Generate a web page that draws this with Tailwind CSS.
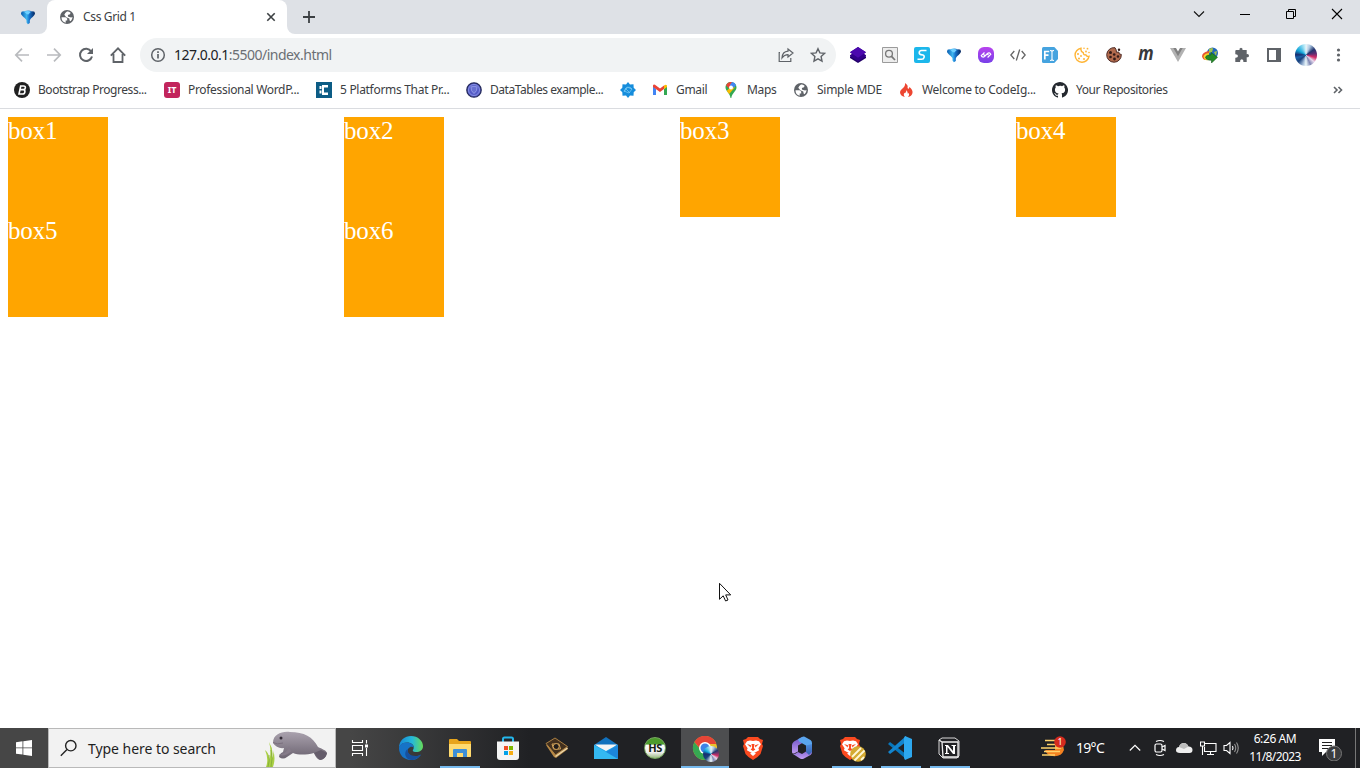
<!DOCTYPE html>
<html lang="en">
<head>
<meta charset="utf-8">
<title>Css Grid 1</title>
<script src="https://cdn.jsdelivr.net/npm/@tailwindcss/browser@4"></script>
</head>
<body class="w-[1360px] h-[768px] overflow-hidden bg-white font-['Noto_Sans',sans-serif] flex flex-col">
<svg class="absolute w-0 h-0">
  <defs>
    <linearGradient id="pin" x1="0" y1="0" x2="1" y2="0"><stop offset="0" stop-color="#075aae"/><stop offset=".4" stop-color="#3fb6f0"/><stop offset=".6" stop-color="#1672cc"/><stop offset="1" stop-color="#05255c"/></linearGradient>
    <linearGradient id="edge" x1="0" y1="0" x2="1" y2="0"><stop offset="0" stop-color="#1688d8"/><stop offset=".55" stop-color="#25b9d9"/><stop offset="1" stop-color="#66dc58"/></linearGradient>
    <linearGradient id="purp" x1="0" y1="0" x2="0" y2="1"><stop offset="0" stop-color="#b843ee"/><stop offset="1" stop-color="#7740e8"/></linearGradient>
    <linearGradient id="sea" x1="0" y1="0" x2="0" y2="1"><stop offset="0" stop-color="#aaa2ae"/><stop offset="1" stop-color="#68606d"/></linearGradient>
    <linearGradient id="sun" x1="0" y1="0" x2="0" y2="1"><stop offset="0" stop-color="#ffd76a"/><stop offset="1" stop-color="#f07c1c"/></linearGradient>
    <linearGradient id="ms" x1="0" y1="0" x2="0" y2="1"><stop offset="0" stop-color="#6a4fc4"/><stop offset="1" stop-color="#c09cf2"/></linearGradient>
    <linearGradient id="ms2" x1="0" y1="0" x2="0" y2="1"><stop offset="0" stop-color="#4d8fe0"/><stop offset="1" stop-color="#3b5fb0"/></linearGradient>
    <symbol id="globe" viewBox="0 0 16 16"><circle cx="8" cy="8" r="7" fill="#5f6368"/><path d="M2.500 8.200h4.100l1.600 1.400v1.800l-1.500.2v2.100C4 13.300 2.400 11 2.500 8.200zM8 2.500c1.200 0 2.600.4 3.600 1.200L11 5.200 8.800 6l.4 1.800 2.900.8 1.400-.6c-.1 1.500-.8 3.200-1.900 4.200l-1-.7-.3-2-3-1.200-2-2.500 1-1.700z" fill="#fff"/></symbol>
    <symbol id="pinico" viewBox="0 0 16 16"><path d="M1 4.500Q1 2 4 2.400 8 .5 12 2.400q3-.4 3 2.100c0 2.200-5.200 5.200-5.200 7.200V14L7.900 15.200 6.500 13.400v-1.800C6.500 9.700 1 6.800 1 4.500z" fill="url(#pin)"/><path d="M4 2.800q4-1.500 7 0L8.300 5.500 7 5.200z" fill="#6fd0ff"/></symbol>
    <symbol id="brave" viewBox="0 0 24 24"><path d="M7 1h10l2 2 3 1-1 4 1 2-2.500 8-3 3L12 24l-4.500-3-3-3L2 10l1-2-1-4 3-1z" fill="#fb4a20"/><path d="M12 5l3-.6 3 .8 2 3-2.600 4 .7 2L15 16l-3 1.500-3-1.500-3.100-1.800.7-2L4 8.200l2-3 3-.8z" fill="#fff"/><path d="M6 8l4 1.200-.3 2.400zM18 8l-4 1.200.3 2.400zM10.500 8h3l-.6 4 1.500 1.500L12 15l-2.400-1.500 1.500-1.500z" fill="#fb4a20"/><path d="M9 17.600l3-1.300 3 1.300-3 2.500z" fill="#fff"/></symbol>
  </defs>
</svg>

<!-- Tab strip -->
<header class="h-[34px] shrink-0 bg-white flex">
  <div class="w-[47px] bg-[#dee1e6] rounded-br-lg flex items-center pl-5"><svg class="w-4 h-4"><use href="#pinico"/></svg></div>
  <div class="w-[240px] bg-[#dee1e6]">
    <div class="h-full bg-white rounded-t-lg flex items-center pl-3 pr-[10px] text-xs text-[#3c4043]">
      <svg class="w-4 h-4 mr-2"><use href="#globe"/></svg>
      <span class="flex-1 tracking-[-0.35px]">Css Grid 1</span>
      <svg class="w-3 h-3" viewBox="0 0 12 12" stroke="#3c4043" stroke-width="1.600"><path d="M2.300 2.300l7.400 7.400M9.700 2.300l-7.400 7.400"/></svg>
    </div>
  </div>
  <div class="flex-1 bg-[#dee1e6] rounded-bl-lg flex justify-between">
    <svg class="w-3 h-3 mt-[11px] ml-4" viewBox="0 0 12 12" stroke="#3c4043" stroke-width="1.800"><path d="M6 0v12M0 6h12"/></svg>
    <div class="flex h-7 items-center">
      <div class="w-[46px] flex justify-center"><svg width="12" height="12" viewBox="0 0 12 12" fill="none" stroke="#111" stroke-width="1.100"><path d="M1 3.500l5 5 5-5"/></svg></div>
      <div class="w-[46px] flex justify-center"><svg width="10" height="10" viewBox="0 0 10 10" stroke="#000"><path d="M0 5.500h10"/></svg></div>
      <div class="w-[46px] flex justify-center"><svg width="10" height="10" viewBox="0 0 10 10" fill="none" stroke="#000"><path d="M.5 2.500h7v7h-7zM2.500 2.500v-2h7v7h-2"/></svg></div>
      <div class="w-[46px] flex justify-center"><svg width="12" height="12" viewBox="0 0 12 12" stroke="#000" stroke-width="1.100"><path d="M1 1l10 10M11 1L1 11"/></svg></div>
    </div>
  </div>
</header>

<!-- Toolbar -->
<div class="h-[42px] shrink-0 flex items-center pl-[6px]">
  <nav class="flex w-[134px]">
    <div class="w-8 flex justify-center"><svg width="16" height="16" viewBox="0 0 16 16" fill="none" stroke="#b9bbbe" stroke-width="1.700"><path d="M15 8H2M8 1.700L1.800 8 8 14.300"/></svg></div>
    <div class="w-8 flex justify-center"><svg width="16" height="16" viewBox="0 0 16 16" fill="none" stroke="#b9bbbe" stroke-width="1.700"><path d="M1 8h13M8 1.700L14.200 8 8 14.300"/></svg></div>
    <div class="w-8 flex justify-center"><svg width="16" height="16" viewBox="0 0 16 16" fill="none" stroke="#5f6368" stroke-width="2"><path d="M13.200 4.500A6.100 6.100 0 1 0 14 9.500"/><path d="M15 1v6H9z" fill="#5f6368" stroke="none"/></svg></div>
    <div class="w-8 flex justify-center"><svg width="16" height="16" viewBox="0 0 16 16" fill="none" stroke="#5f6368" stroke-width="1.800"><path d="M.8 8.600L8 1.300l7.200 7.300M3.500 7v8h9V7"/></svg></div>
  </nav>
  <div class="w-[696px] h-[34px] bg-[#f1f3f4] rounded-full flex items-center pl-[10px] pr-[10px] text-sm text-[#6b6f74]">
    <svg class="mr-2" width="16" height="16" viewBox="0 0 16 16" fill="none" stroke="#5f6368" stroke-width="1.500"><circle cx="8" cy="8" r="6.300"/><path d="M8 7v4.500M8 4.300v1.600" stroke-width="1.700"/></svg>
    <span class="flex-1 tracking-[-0.51px]"><span class="text-[#202124]">127.0.0.1</span>:5500/index.html</span>
    <svg class="mr-4" width="16" height="16" viewBox="0 0 16 16" fill="none" stroke="#5f6368" stroke-width="1.200"><path d="M2 5.500H1.200v9h11.600V11M10 2l5 4-5 4V7.700c-2.600 0-4.300.8-6 3.300.2-4 2.300-6.500 6-6.800z"/></svg>
    <svg width="16" height="16" viewBox="0 0 16 16" fill="none" stroke="#5f6368" stroke-width="1.400"><path d="M8 1.700l1.900 4.200 4.600.5-3.400 3.100.9 4.600L8 11.800l-4 2.300.9-4.600L1.500 6.400l4.600-.5z"/></svg>
  </div>
  <div class="flex ml-[6px] items-center">
    <div class="w-8 flex justify-center"><svg width="16" height="16" viewBox="0 0 16 16"><path d="M0 9.800l2-1.300h12l2 1.300v1.200L8 16l-8-5z" fill="#220068"/><path d="M8 0l8 5.300-2 1.500 2 1.400v1L8 14.500 0 9.200v-1l2-1.400-2-1.500z" fill="#32018a"/><path d="M8 0l8 5.300-8 5.400-8-5.400z" fill="#4b08ae"/></svg></div>
    <div class="w-8 flex justify-center"><svg width="16" height="16" viewBox="0 0 16 16" fill="none"><path d="M.5.500h15v15H.5z" fill="#ededed" stroke="#9b9b9b"/><circle cx="7" cy="6.800" r="3.400" stroke="#777" stroke-width="1.300"/><path d="M9.500 9.300l3.500 3.700" stroke="#777" stroke-width="1.700"/></svg></div>
    <div class="w-8 flex justify-center"><svg width="16" height="16" viewBox="0 0 16 16"><rect width="16" height="16" rx="2" fill="#1cb7eb"/><path d="M12.500 3.500H7.500c-2.800 0-3 3.600-.6 4.100l2 .4c2.200.5 1.400 4.300-1.200 4.300H3.500" fill="none" stroke="#fff" stroke-width="1.600"/></svg></div>
    <div class="w-8 flex justify-center"><svg class="w-4 h-4"><use href="#pinico"/></svg></div>
    <div class="w-8 flex justify-center"><svg width="16" height="16" viewBox="0 0 16 16"><rect width="16" height="16" rx="6" fill="url(#purp)"/><path d="M6.500 5.500L3.300 8.600q1.300 2.400 3.200.9l3-3q1.700-1.500 3.300.8L9.600 10.500M5.500 7.500l1.200 1M10.500 8l-1.200-.9" fill="none" stroke="#fff" stroke-width="1.200"/></svg></div>
    <div class="w-8 flex justify-center"><svg width="16" height="16" viewBox="0 0 16 16" fill="none" stroke="#656565" stroke-width="1.300"><path d="M4.300 4L.8 8l3.500 4M11.700 4l3.500 4-3.500 4M9.700 2.500l-3.400 11"/></svg></div>
    <div class="w-8 flex justify-center"><svg width="16" height="16" viewBox="0 0 16 16"><path d="M1.500 0h10.800L16 4v8l-3.700 4H1.500Q0 16 0 14.500v-13Q0 0 1.500 0z" fill="#45a3df"/><path d="M2.800 12.500v-8h4.400M2.800 8.200h3.700" fill="none" stroke="#fff" stroke-width="1.700"/><path d="M8 3.500q1.700 0 2 1 .3-1 2-1M10 4v8.500M8 13.500q1.700 0 2-1 .3 1 2 1" fill="none" stroke="#fff" stroke-width="1.100"/></svg></div>
    <div class="w-8 flex justify-center"><svg width="16" height="16" viewBox="0 0 16 16" fill="none" stroke="#ffb536" stroke-width="1.400"><path d="M7 1.300a7 7 0 1 0 8 8q-2 .6-3.200-1.500-2.500.3-2.500-2.100Q6.400 4.500 7 1.300z"/><g fill="#ffb536" stroke="none"><circle cx="4" cy="7" r="1"/><circle cx="7" cy="9" r=".9"/><circle cx="5" cy="11.500" r="1"/><circle cx="10" cy="12" r="1"/><circle cx="10" cy="1.300" r=".8"/><circle cx="13.500" cy="1.700" r=".9"/><circle cx="12" cy="4.500" r=".9"/><circle cx="15" cy="5.500" r=".8"/></g></svg></div>
    <div class="w-8 flex justify-center"><svg width="16" height="16" viewBox="0 0 16 16"><path d="M9 .7a7.300 7.300 0 1 0 6.300 6.700l-2-.4-.5-2-2.300.3-.4-2.500z" fill="#b16a4d" stroke="#4f2b25"/><g fill="#331b18"><circle cx="4.500" cy="5.500" r="1.500"/><circle cx="8.200" cy="7.500" r="1.300"/><circle cx="4.500" cy="10" r="1.300"/><circle cx="8.500" cy="12" r="1.400"/><circle cx="12" cy="9.500" r="1.300"/><circle cx="13" cy="2.800" r="1.200"/></g></svg></div>
    <div class="w-8 h-5 flex justify-center items-center text-[20px] leading-none font-bold italic text-[#37383a] pb-1"><span class="inline-block scale-x-85">m</span></div>
    <div class="w-8 flex justify-center"><svg width="16" height="16" viewBox="0 0 16 16"><path d="M0 1h5l3 5 3-5h5L8 15z" fill="#b2b2b2"/><path d="M3.300 1H6l2 3.500L10 1h2.700L8 9.200z" fill="#818181"/></svg></div>
    <div class="w-8 flex justify-center"><svg width="17" height="16" viewBox="0 0 17 16"><circle cx="10.500" cy="6" r="5.500" fill="#2468bb"/><path d="M7 2q4-2 4 0L10 5 7 6zM12 5l3-1-1 5z" fill="#a3c34b"/><path d="M0 9.500Q0 5 7 4v3Q3 8 4 13 1 13 0 9.500z" fill="#e75531"/><path d="M1.500 9.500Q2 6.500 7 6v3Q4 10 5.500 13.500 2 13 1.500 9.500z" fill="#f4d62b"/><path d="M3.500 10Q4 8 9 7.800V5.500l6.500 4.800L9.500 16v-2.800Q4 13.500 3.500 10z" fill="#238b26" stroke="#12591a" stroke-width=".6"/></svg></div>
    <div class="w-8 flex justify-center"><svg width="16" height="16" viewBox="0 0 16 16" fill="#5f6368"><path d="M2.300 3H5.500Q5 1 7 .8 9 1 8.500 3h4.200v4.200q2.200-.5 2.300 1.500-.1 2-2.300 1.500V15H9.400q.3-2.600-1.600-2.700Q5.800 12.400 6.100 15H1.300v-4.200q2.600.2 2.700-1.700Q3.900 7.200 1.300 7.300V4q0-1 1-1z"/></svg></div>
    <div class="w-8 flex justify-center"><svg width="14" height="14" viewBox="0 0 14 14"><path d="M0 0h14v14H0z" fill="#5f6368"/><path d="M2 2h7v10H2z" fill="#fff"/></svg></div>
    <div class="w-8 flex justify-center"><div class="w-[22px] h-[22px] shrink-0 rounded-full bg-[conic-gradient(from_0deg,#eef6fa,#a9c4de_25deg,#23366f_55deg,#5a2d71_80deg,#d22e68_105deg,#e8d8ec_130deg,#8088b4_155deg,#edf9fc_180deg,#9ab4d4_200deg,#17417e_230deg,#1b61a8_255deg,#182d70_272deg,#10a5d8_300deg,#5cc4e8_325deg,#dff7fb)]"></div></div>
    <div class="w-8 flex justify-center"><svg width="16" height="16" fill="#5f6368"><circle cx="8.500" cy="3" r="1.600"/><circle cx="8.500" cy="8" r="1.600"/><circle cx="8.500" cy="13" r="1.600"/></svg></div>
  </div>
</div>

<!-- Bookmarks bar -->
<div class="h-[33px] shrink-0 border-b border-[#dadce0] pl-[14px] pr-4 pb-1 flex items-center text-xs text-[#3c4043] whitespace-nowrap">
  <div class="w-[150px] flex items-center gap-2"><svg width="16" height="16" viewBox="0 0 16 16"><circle cx="8" cy="8" r="8" fill="#212121"/><path d="M6.700 4h3c2.500 0 2 3.600-.3 3.600H5.900h3.300c2.700 0 2 4.400-.6 4.400H5z" fill="none" stroke="#fff" stroke-width="1.600"/></svg><span class="tracking-[-0.45px]">Bootstrap Progress...</span></div>
  <div class="w-[152px] flex items-center gap-2"><div class="w-4 h-4 bg-[#c2255c] rounded-[3px] text-white font-bold text-[9px] leading-[15px] text-center">IT</div><span class="tracking-[-0.32px]">Professional WordP...</span></div>
  <div class="w-[150px] flex items-center gap-2"><svg width="16" height="16" viewBox="0 0 16 16"><path d="M0 0h16v16H0z" fill="#0c5c85"/><path d="M6 3h6v2.500H8v5h4V13H6zM3.500 4h2v3h-2zm0 4.500h2v3h-2z" fill="#fff"/></svg><span class="tracking-[-0.3px]">5 Platforms That Pr...</span></div>
  <div class="w-[154px] flex items-center gap-2"><svg width="16" height="16" viewBox="0 0 16 16"><circle cx="8" cy="8" r="7.200" fill="#555bc6" stroke="#252a5b" stroke-width="1.300"/><circle cx="8" cy="8" r="5.500" fill="none" stroke="#8791e4"/><path d="M5 5q3-1.500 6 0 .5 4-3 6.500Q4.500 9 5 5z" fill="#6870d1" stroke="#8f98e6"/></svg><span class="tracking-[-0.45px]">DataTables example...</span></div>
  <div class="w-8"><svg width="16" height="16" viewBox="0 0 16 16"><path d="M8 0l2 2.500 3.500-.2.200 3.500L16 8l-2.300 2.200-.2 3.500-3.500-.2L8 16l-2-2.500-3.500.2-.2-3.500L0 8l2.300-2.200.2-3.500 3.500.2z" fill="#168ddc"/><path d="M4 9l3-4 5 2-3 4zM5 6l5 5M4 10q4-8 8-3" fill="none" stroke="#72c7f3" stroke-width=".8"/></svg></div>
  <div class="w-[71px] flex items-center gap-2"><svg width="16" height="16" viewBox="0 0 16 16"><path d="M1 4v9h3V7z" fill="#4285f4"/><path d="M15 4v9h-3V7z" fill="#34a853"/><path d="M1 3.500Q1.500 2 3 2.800L8 6.500l4-3V7l-4 3-7-5z" fill="#ea4335"/><path d="M12 3.500q2-1.500 3 0V5l-3 2.200z" fill="#fbbc04"/></svg><span class="tracking-[-0.3px]">Gmail</span></div>
  <div class="w-[70px] flex items-center gap-2"><svg width="16" height="16" viewBox="0 0 16 16"><path d="M2.500 5.500C2.500 2 5 0 8 0c3.500 0 5.500 2.500 5.500 5.500C13.500 9 9 11 8.300 16h-.8C7 11 2.500 9 2.500 5.500z" fill="#34a853"/><path d="M3 3.300L6 6.600l3.500-6.400Q5 -.9 3 3.300z" fill="#ea4335"/><path d="M9 .1Q12 .7 13 3.200L9.600 7 6.800 3.300z" fill="#4285f4"/><path d="M6 6.500L3.700 9q1.800 2.200 2.500 3l5.800-6.700z" fill="#fbbc04"/><circle cx="8" cy="5.500" r="2" fill="#fff"/></svg><span class="tracking-[-0.3px]">Maps</span></div>
  <div class="w-[105px] flex items-center gap-2"><svg class="w-4 h-4"><use href="#globe"/></svg><span class="tracking-[-0.26px]">Simple MDE</span></div>
  <div class="w-[154px] flex items-center gap-2"><svg width="16" height="16" viewBox="0 0 16 16"><path d="M7 1q3.500 2.200 2.500 5l1 1 1-2q3.500 3 3 6-.8 3.500-4.500 4 2-1.500.8-4l-1 .8Q10 9.500 8 8q.8 2.500-1.500 3-1.500 1.500.3 4Q2 14 2 10q.2-2 2.500-3.500Q7.500 4 7 1z" fill="#ed4631"/></svg><span class="tracking-[-0.3px]">Welcome to CodeIg...</span></div>
  <div class="flex items-center gap-2"><svg width="16" height="16" viewBox="0 0 16 16" fill="#24292f"><path d="M8 0C3.580 0 0 3.580 0 8c0 3.540 2.290 6.530 5.470 7.590.4.070.55-.17.55-.38v-1.490c-2.230.48-2.700-.94-2.700-.94-.36-.93-.89-1.170-.89-1.170-.73-.5.060-.49.060-.49.800.06 1.230.83 1.230.83.71 1.220 1.870.87 2.330.66.070-.52.28-.87.510-1.070-1.780-.2-3.640-.89-3.640-3.950 0-.87.31-1.590.82-2.150-.08-.2-.36-1.020.08-2.120 0 0 .67-.21 2.200.82A7.700 7.700 0 0 1 8 3.870c.68 0 1.360.09 2 .27 1.530-1.040 2.200-.82 2.200-.82.44 1.100.16 1.920.08 2.120.51.56.82 1.270.82 2.150 0 3.070-1.870 3.750-3.650 3.950.29.25.54.73.54 1.480v2.190c0 .21.15.46.55.38A8 8 0 0 0 8 0z"/></svg><span class="tracking-[-0.43px]">Your Repositories</span></div>
  <svg class="ml-auto" width="12" height="12" viewBox="0 0 12 12" fill="none" stroke="#5f6368" stroke-width="1.600"><path d="M2 3l3 3-3 3M6.500 3l3 3-3 3"/></svg>
</div>

<!-- Page -->
<main class="relative flex-1 p-2 font-['Liberation_Serif',serif] text-[25px] leading-[27px] tracking-[-0.15px] text-white">
  <div class="grid grid-cols-4">
    <div class="w-[100px] h-[100px] bg-[#ffa500]">box1</div>
    <div class="w-[100px] h-[100px] bg-[#ffa500]">box2</div>
    <div class="w-[100px] h-[100px] bg-[#ffa500]">box3</div>
    <div class="w-[100px] h-[100px] bg-[#ffa500]">box4</div>
    <div class="w-[100px] h-[100px] bg-[#ffa500]">box5</div>
    <div class="w-[100px] h-[100px] bg-[#ffa500]">box6</div>
  </div>
  <svg class="absolute left-[719px] top-[473px]" width="13" height="20" viewBox="0 0 13 20"><path d="M.5 1.300v16l3.700-3.500 2.400 5.200 2.400-1-2.300-5.100h5z" fill="#fff" stroke="#111"/></svg>
</main>

<!-- Taskbar -->
<footer class="h-10 shrink-0 flex bg-[linear-gradient(90deg,#464646_0px,#464646_350px,#202124_530px,#202124_100%)] text-white">
  <div class="w-12 flex items-center justify-center"><svg width="16" height="16" viewBox="0 0 16 16" fill="#fff"><path d="M0 2.200L6.500 1.300v6.200H0zM7.300 1.200L16 0v7.500H7.300zM0 8.300h6.500v6.300L0 13.700zM7.300 8.300H16V16l-8.700-1.200z"/></svg></div>
  <div class="w-[288px] bg-[#f2f2f2] border border-[#b9b9b9] flex items-center pl-[11px] text-[#1f1f1f] text-sm">
    <svg width="18" height="18" viewBox="0 0 18 18" fill="none" stroke="#222" stroke-width="1.400"><circle cx="10.800" cy="6.700" r="5.200"/><path d="M7 10.500L.8 16.700"/></svg>
    <span class="ml-[10px] flex-1 pt-0.5 tracking-[-0.05px]">Type here to search</span>
    <svg class="mr-[5px]" width="66" height="38" viewBox="0 0 66 38"><path d="M9 14C9 5 18 2 26 3c14 0 23 5 28 15 4 2 8 3 9 6-1 4-4 7-7 7-3-1-5-4-6-7-8 2-16 2-21 0l-6 4q-4 3-8 0 0-3 4-5l1-4q-7 1-11-5z" fill="url(#sea)"/><path d="M25 17q-1 7-10 8.500 5 3 12-3z" fill="#857b89"/><path d="M50 24l7-3 6 3q-1 6-7 7z" fill="#655d6b"/><circle cx="17" cy="9" r="1.500" fill="#312a35"/><path d="M9 13.500q4 2.500 10 .5" fill="none" stroke="#7b707e"/><path d="M2 38q3-8-1-17 5 4 4 11 3-9 0-19 5 8 3 16 2-3 1-8 3 8 0 17z" fill="#a9cf45"/><path d="M4 38q2-8 1-12M7 38q2-9 0-17" fill="none" stroke="#80ab34" stroke-width=".8"/></svg>
  </div>
  <div class="w-[51px] pr-[3px] flex items-center justify-center"><svg width="18" height="18" viewBox="0 0 18 18" fill="none" stroke="#fff" stroke-width="1.100"><path d="M1.500 1v2.500h10V1M1.500 17v-2.500h10V17M1.500 6.500h10v5h-10zM15.500 1v3.500M15.500 9v8"/><path d="M14 5.500h3v3h-3z" fill="#fff" stroke="none"/></svg></div>
  <div class="w-[49px] pr-px flex items-center justify-center"><svg width="24" height="24" viewBox="0 0 24 24"><path d="M0 12C0 4 6 0 12 0c7 0 12 5 12 10 0 4-3 6-7 6-3 0-4-1-2.500-3C16 9 12 6.500 8 6.500c-5 0-7 3-8 5.500z" fill="url(#edge)"/><path d="M0 12c1-4 4-5.500 8-5.500 4 0 7 2.500 6.800 5.500-2-3-7 0-6 4 1.200 5 8 6 13.200 2.500C19 23 16 24 12 24 5 24 0 19 0 12z" fill="#1673c7"/><path d="M8.700 13c-1 6 7 9 13.300 5.500-2 3.500-6 5.500-10 5.500-7-1-7-9-3.300-11z" fill="#16509e"/></svg></div>
  <div class="w-[49px] pr-px relative flex items-center justify-center"><svg width="22" height="20" viewBox="0 0 22 20"><path d="M0 2q0-1 1-1h7l2 2h11q1 0 1 1v14q0 1-1 1H1q-1 0-1-1z" fill="#e8a51b"/><path d="M0 6h22v12q0 1-1 1H1q-1 0-1-1z" fill="#ffdb70"/><path d="M4 12q0-1 1-1h12q1 0 1 1v7h-4v-4H8v4H4z" fill="#3d8fd8"/></svg><div class="absolute bottom-0 left-1 w-10 h-[2px] bg-[#76b9ed]"></div></div>
  <div class="w-[49px] pr-[3px] flex items-center justify-center"><svg width="24" height="24" viewBox="0 0 24 24"><path d="M7 6V3q0-1.500 1.500-1.500h7Q17 1.500 17 3v3" fill="none" stroke="#24b7ec" stroke-width="2"/><path d="M1 5.500h22V21q0 3-3 3H4q-3 0-3-3z" fill="#f4f4f4"/><path d="M8 10h4v4H8z" fill="#ef4e24"/><path d="M13 10h4v4h-4z" fill="#7db900"/><path d="M8 15h4v4H8z" fill="#03a1e9"/><path d="M13 15h4v4h-4z" fill="#f8ae14"/></svg></div>
  <div class="w-[49px] pr-[3px] flex items-center justify-center"><svg width="24" height="22" viewBox="0 0 24 22"><path d="M1 8L9 20l2 1 12-9-1-2z" fill="#b88945"/><path d="M1 6.500L10 1l12.500 8.500L10.500 18z" fill="#42301e" stroke="#b78846" stroke-width=".9"/><path d="M10.500 19.500l12-8.500" stroke="#ead9b0" stroke-width="1.200"/><path d="M7 7h7l1.500 5h-7z" fill="#211d1b" stroke="#d2a45b"/><circle cx="11.200" cy="9.500" r="3" fill="#201c1a" stroke="#d2a45b"/></svg></div>
  <div class="w-[49px] pr-[3px] flex items-center justify-center"><svg width="24" height="24" viewBox="0 0 24 24"><path d="M0 9L12 1l12 8v14H0z" fill="#1171bd"/><path d="M1 8.500h22L12 18z" fill="#f5f5f5"/><path d="M0 8.500l12 6.500 12-6.500V23H0z" fill="#20a4e8"/><path d="M0 23L24 9v14z" fill="#1b86dc"/><path d="M0 9l24 14H0z" fill="#34b8f1"/></svg></div>
  <div class="w-[49px] pr-[3px] flex items-center justify-center"><div class="w-[22px] h-[22px] rounded-full border border-[#77a960] bg-[linear-gradient(#4c9b2c_30%,#fff_36%,#eee_72%,#9bba80)] text-[#172015] text-[11px] leading-[20px] font-bold text-center tracking-[-0.6px]">HS</div></div>
  <div class="w-12 relative flex items-center justify-center bg-[#4d4e50]"><svg width="26" height="24" viewBox="0 0 26 24"><circle cx="13" cy="12" r="12" fill="#eac12d"/><path d="M2.500 6A12 12 0 0 0 13 24l5-8-9-2z" fill="#36a852"/><path d="M2.500 6a12 12 0 0 1 21.800 2H13l-4 6z" fill="#e54537"/><circle cx="13" cy="12" r="6" fill="#fff"/><circle cx="13" cy="12" r="4.500" fill="#3e83e7"/></svg><div class="absolute left-[22px] top-[18px] w-4 h-4 rounded-full bg-[conic-gradient(from_0deg,#eef6fa,#a9c4de_25deg,#23366f_60deg,#d22e68_105deg,#e8d8ec_130deg,#8088b4_155deg,#edf9fc_180deg,#17417e_230deg,#182d70_272deg,#10a5d8_300deg,#5cc4e8_325deg,#dff7fb)]"></div><div class="absolute bottom-0 left-0 w-full h-[2px] bg-[#76b9ed]"></div></div>
  <div class="w-[49px] pr-px flex items-center justify-center"><svg width="24" height="24"><use href="#brave"/></svg></div>
  <div class="w-[49px] pr-px flex items-center justify-center"><svg width="24" height="24" viewBox="0 0 24 24"><path d="M12 1L4 5.500Q2 7 2 9v7q0 2 2 1.500l4-2V9.500L14 6l3-1.500z" fill="url(#ms)"/><path d="M12 1q2-1 4 .5L20.500 4Q22 5 22 7v7l-6 2V9.500L9 5.500 8 3.300z" fill="#5aa5ee"/><path d="M22 10v6q0 2-1.500 3L14 22.500q-2 1-4 0L3 18q2 .6 5-2l4 2 4-2.500z" fill="url(#ms)"/><path d="M22 8v8l-3 3-3-3V9.500z" fill="url(#ms2)"/></svg></div>
  <div class="w-[49px] relative flex items-center justify-center"><svg class="mr-1" width="24" height="24"><use href="#brave"/></svg><svg class="absolute left-[23px] top-[18px]" width="16" height="16" viewBox="0 0 16 16"><circle cx="8" cy="8" r="7.800" fill="#d4aa31"/><path d="M2 11l9-9M4.500 14.500l10-10M11 14l3-3" stroke="#fff7d6" stroke-width="1.800"/></svg><div class="absolute bottom-0 left-[5px] w-10 h-[2px] bg-[#76b9ed]"></div></div>
  <div class="w-[49px] pr-px relative flex items-center justify-center"><svg width="24" height="24" viewBox="0 0 24 24"><path d="M0 8l2-2 16 12v5z" fill="#0877bc"/><path d="M0 16l2 2L18 6V0z" fill="#1385ce"/><path d="M17 0l7 3v18l-7 3-1-2V2z" fill="#2da8ef"/></svg><div class="absolute bottom-0 left-[5px] w-10 h-[2px] bg-[#76b9ed]"></div></div>
  <div class="w-[49px] pr-px relative flex items-center justify-center"><svg width="22" height="22" viewBox="0 0 22 22"><path d="M1 3l3-2h13l4 3v15l-2 2H5l-4-4z" fill="#202124" stroke="#d9d9d9"/><path d="M4 5h16v15H5zM1 3l3 2" fill="none" stroke="#eee" stroke-width="1.300"/><path d="M7 8h3l5 6V9h-1.500V8H18v1h-1v8h-2L9.500 10v6H11v1H7v-1h1V9H7z" fill="#fff"/></svg><div class="absolute bottom-0 left-[5px] w-10 h-[2px] bg-[#76b9ed]"></div></div>
  <div class="flex items-center ml-auto">
    <svg width="26" height="26" viewBox="0 0 26 26"><path d="M4 15h19a10 9 0 0 1-19 0z" fill="#f58220"/><path d="M14 5a10 10 0 0 1 9 10H14z" fill="url(#sun)"/><path d="M4 5.500h12M6 9.500h12M0 13h20M3 16.500h16M1 20h13" stroke="#ffd36b" stroke-width="1.600"/><circle cx="19" cy="7" r="5.800" fill="#d52b1e"/><text x="19" y="10.200" text-anchor="middle" fill="#fff" font-size="9" font-family="Noto Sans, sans-serif">1</text></svg>
    <span class="w-[52px] ml-[9px] text-sm tracking-[-0.7px]">19°C</span>
    <svg class="ml-px" width="12" height="12" viewBox="0 0 12 12" fill="none" stroke="#fff" stroke-width="1.200"><path d="M.8 8.500L6 3.300l5.200 5.200"/></svg>
    <svg class="ml-[12px]" width="14" height="18" viewBox="0 0 14 18" fill="none" stroke="#fff" stroke-width="1.200"><rect x="2" y="5" width="7" height="8" rx="1.500"/><path d="M9 8l3-1.500v5L9 10M3 2.500q4-2 8 0M3 15.500q4 2 8 0"/></svg>
    <svg class="ml-[9px]" width="17" height="12" viewBox="0 0 17 12"><path d="M4 11Q0 11 0 8.300 0 5.300 3 5q1.200-4 5-4 3 0 4.500 3.500 4 .2 4 3.500 0 3-3 3z" fill="#eee"/><path d="M3 5q1.200-4 5-4 3 0 4.500 3.500L8 7z" fill="#bdbdbd"/></svg>
    <svg class="ml-[7px]" width="17" height="16" viewBox="0 0 17 16" fill="none" stroke="#fff" stroke-width="1.100"><path d="M5 3.500h11v8H4.500V7M10.500 12v3M7 14.500h7M.5 2h4v4h-4zM2.500 6v9"/></svg>
    <svg class="ml-[6px]" width="17" height="16" viewBox="0 0 17 16" fill="none" stroke="#fff" stroke-width="1.100"><path d="M1 5.500h2.500L7 2.500v11l-3.500-3H1zM9.500 6q1 2 0 4"/><path d="M11.500 4q2.500 4 0 8M13.500 2.500q3.500 5.500 0 11" stroke="#949494"/></svg>
    <div class="ml-[6px] w-[58px] text-xs leading-[18px] text-center whitespace-nowrap flex flex-col items-center"><span class="tracking-[-0.4px]">6:26 AM</span><span class="tracking-[-0.6px]">11/8/2023</span></div>
    <svg class="ml-[14px] mr-[10px]" width="27" height="26" viewBox="0 0 27 26"><path d="M1 4h16v13H8l-4 4v-4H1z" fill="#fff"/><path d="M4 7.500h10M4 10.500h10M4 13.500h7" stroke="#222"/><circle cx="16" cy="18.500" r="7.500" fill="#3b3c3e" stroke="#777"/><text x="16" y="23" text-anchor="middle" fill="#fff" font-size="12" font-family="Noto Sans, sans-serif">1</text></svg>
    <div class="w-[5px] h-10 border-l border-[#777]"></div>
  </div>
</footer>
</body>
</html>
